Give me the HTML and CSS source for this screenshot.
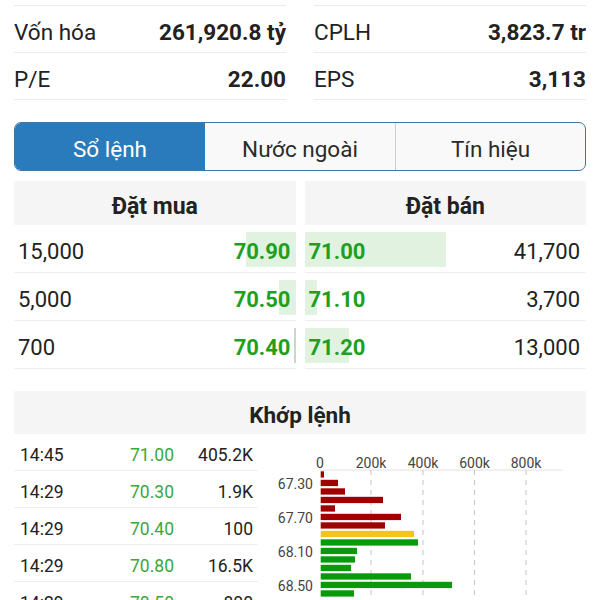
FILE: index.html
```html
<!DOCTYPE html>
<html lang="vi">
<head>
    <meta charset="UTF-8">
    <meta name="viewport" content="width=device-width, initial-scale=1.0">
    <title>Sổ lệnh</title>
    <link rel="stylesheet" href="styles.css">
</head>
<body>
    <div class="stats">
        <div class="stat-col">
            <div class="stat-row"><span>Vốn hóa</span><b>261,920.8 tỷ</b></div>
            <div class="stat-row"><span>P/E</span><b>22.00</b></div>
        </div>
        <div class="stat-col">
            <div class="stat-row"><span>CPLH</span><b>3,823.7 tr</b></div>
            <div class="stat-row"><span>EPS</span><b>3,113</b></div>
        </div>
    </div>

    <div class="tabs">
        <div class="tab active">Sổ lệnh</div>
        <div class="tab">Nước ngoài</div>
        <div class="tab">Tín hiệu</div>
    </div>

    <div class="book">
        <div class="book-side buy">
            <div class="book-head">Đặt mua</div>
            <div class="book-row"><div class="vol-bar" style="width: 50px"></div><span>15,000</span><b>70.90</b></div>
            <div class="book-row"><div class="vol-bar" style="width: 17px"></div><span>5,000</span><b>70.50</b></div>
            <div class="book-row"><div class="vol-bar thin" style="width: 2px"></div><span>700</span><b>70.40</b></div>
        </div>
        <div class="book-side sell">
            <div class="book-head">Đặt bán</div>
            <div class="book-row"><div class="vol-bar" style="width: 141px"></div><b>71.00</b><span>41,700</span></div>
            <div class="book-row"><div class="vol-bar" style="width: 12px"></div><b>71.10</b><span>3,700</span></div>
            <div class="book-row"><div class="vol-bar" style="width: 44px"></div><b>71.20</b><span>13,000</span></div>
        </div>
    </div>

    <div class="match">
        <div class="match-head">Khớp lệnh</div>
        <div class="match-body">
            <div class="ticks">
                <div class="tick"><span>14:45</span><span class="tick-price">71.00</span><span class="tick-vol">405.2K</span></div>
                <div class="tick"><span>14:29</span><span class="tick-price">70.30</span><span class="tick-vol">1.9K</span></div>
                <div class="tick"><span>14:29</span><span class="tick-price">70.40</span><span class="tick-vol">100</span></div>
                <div class="tick"><span>14:29</span><span class="tick-price">70.80</span><span class="tick-vol">16.5K</span></div>
                <div class="tick"><span>14:29</span><span class="tick-price">70.50</span><span class="tick-vol">800</span></div>
            </div>
            <svg class="chart" width="328" height="170" viewBox="0 0 328 170">
                <g class="axis-text" text-anchor="middle">
                    <text x="62" y="34">0</text>
                    <text x="113" y="34">200k</text>
                    <text x="165" y="34">400k</text>
                    <text x="216.5" y="34">600k</text>
                    <text x="268" y="34">800k</text>
                </g>
                <line x1="62" y1="36" x2="305" y2="36" stroke="#e2e2e2" stroke-width="1"/>
                <g stroke="#c4c4c4" stroke-width="1" stroke-dasharray="5 5">
                    <line x1="113" y1="36" x2="113" y2="170"/>
                    <line x1="165" y1="36" x2="165" y2="170"/>
                    <line x1="216.5" y1="36" x2="216.5" y2="170"/>
                    <line x1="268" y1="36" x2="268" y2="170"/>
                </g>
                <g fill="#a00000">
                    <rect x="62.7" y="37.3" width="3.3" height="6.3"/>
                    <rect x="62.7" y="45.8" width="17.3" height="6.3"/>
                    <rect x="62.7" y="54.3" width="24.3" height="6.3"/>
                    <rect x="62.7" y="62.8" width="62.3" height="6.3"/>
                    <rect x="62.7" y="71.3" width="14.3" height="6.3"/>
                    <rect x="62.7" y="79.8" width="80.3" height="6.3"/>
                    <rect x="62.7" y="88.3" width="64.3" height="6.3"/>
                </g>
                <rect x="62.7" y="96.8" width="93.3" height="6.3" fill="#f3c614"/>
                <g fill="#0a990a">
                    <rect x="62.7" y="105.3" width="97.3" height="6.3"/>
                    <rect x="62.7" y="113.8" width="36.3" height="6.3"/>
                    <rect x="62.7" y="122.3" width="34.3" height="6.3"/>
                    <rect x="62.7" y="130.8" width="30.3" height="6.3"/>
                    <rect x="62.7" y="139.3" width="90.3" height="6.3"/>
                    <rect x="62.7" y="147.8" width="131.3" height="6.3"/>
                    <rect x="62.7" y="156.3" width="33.3" height="6.3"/>
                </g>
                <g class="axis-text" text-anchor="end">
                    <text x="55" y="55">67.30</text>
                    <text x="55" y="89">67.70</text>
                    <text x="55" y="122.5">68.10</text>
                    <text x="55" y="156.5">68.50</text>
                </g>
            </svg>
        </div>
    </div>
</body>
</html>
```

FILE: styles.css
```css
body {
    margin: 0;
    padding: 5px 14px 0;
    height: 600px;
    box-sizing: border-box;
    overflow: hidden;
    background: #fff;
    color: #222;
    font-family: Roboto, "Noto Sans", Arial, sans-serif;
}

/* top stats */
.stats {
    display: grid;
    grid-template-columns: 1fr 1fr;
    gap: 28px;
}
.stat-row {
    display: flex;
    justify-content: space-between;
    align-items: center;
    height: 47px;
    padding-top: 6px;
    box-sizing: border-box;
    border-bottom: 1px solid #ececec;
    font-size: 22.5px;
}
.stat-row:first-child {
    border-top: 1px solid #ececec;
    height: 48px;
}
.stat-row b { font-weight: 700; }

/* tabs */
.tabs {
    display: grid;
    grid-template-columns: 1fr 1fr 1fr;
    margin-top: 22px;
    height: 49px;
    box-sizing: border-box;
    border: 1px solid #3b78aa;
    border-radius: 7px;
    overflow: hidden;
    background: #f9f9f9;
}
.tab {
    display: flex;
    align-items: center;
    justify-content: center;
    padding-top: 5px;
    font-size: 22.5px;
    color: #2b2b2b;
}
.tab + .tab + .tab { border-left: 1px solid #cfcfcf; }
.tab.active {
    background: #2a7bbb;
    color: #fff;
}

/* order book */
.book {
    display: grid;
    grid-template-columns: 1fr 1fr;
    gap: 9px;
    margin-top: 10px;
}
.book-head {
    height: 44px;
    box-sizing: border-box;
    padding-top: 6px;
    display: flex;
    align-items: center;
    justify-content: center;
    background: #f5f5f5;
    font-size: 23px;
    font-weight: 700;
}
.book-row {
    position: relative;
    display: flex;
    justify-content: space-between;
    align-items: center;
    height: 48px;
    box-sizing: border-box;
    border-bottom: 1px solid #efefef;
    font-size: 22px;
}
.book-row span, .book-row b {
    position: relative;
    top: 3px;
}
.book-row b {
    color: #1ea01e;
    font-weight: 700;
}
.buy .book-row { padding: 0 5px 0 4px; }
.sell .book-row { padding: 0 6px 0 4px; }
.vol-bar {
    position: absolute;
    top: 7px;
    bottom: 5px;
    background: #e1f2e1;
}
.buy .vol-bar { right: 0; }
.sell .vol-bar { left: 0; }
.vol-bar.thin { background: #c9d6c9; }

/* matched orders */
.match { margin-top: 22px; }
.match-head {
    height: 43px;
    box-sizing: border-box;
    padding-top: 5px;
    display: flex;
    align-items: center;
    justify-content: center;
    background: #f5f5f5;
    font-size: 22.5px;
    font-weight: 700;
}
.match-body { display: flex; }
.ticks { width: 244px; flex: none; }
.tick {
    display: grid;
    grid-template-columns: 1fr 70px 79px;
    align-items: center;
    height: 37px;
    box-sizing: border-box;
    padding: 6px 5px 0 6px;
    border-bottom: 1px solid #eeeeee;
    font-size: 17.5px;
}
.tick-price { text-align: right; color: #3aa83a; }
.tick-vol { text-align: right; }
.chart { flex: none; display: block; }
.axis-text {
    font-family: Roboto, Arial, sans-serif;
    font-size: 14px;
    fill: #444;
}
```
